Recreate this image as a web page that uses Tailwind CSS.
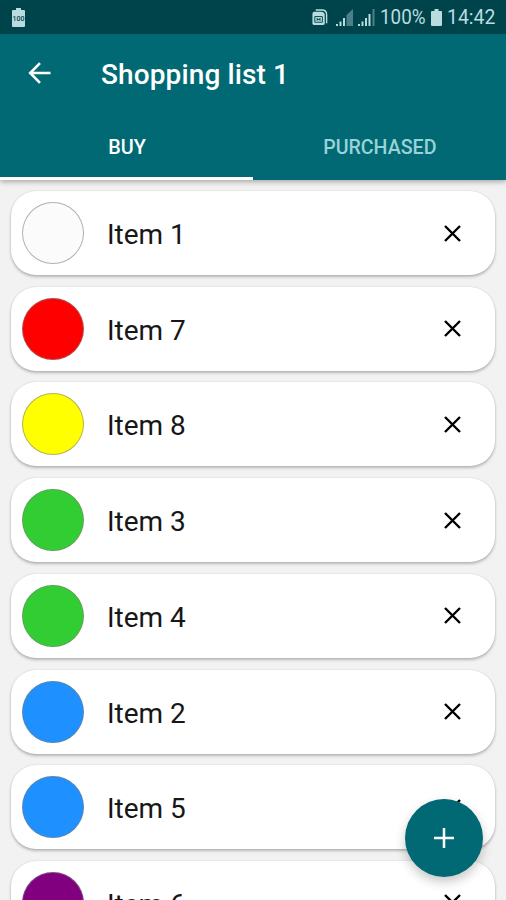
<!DOCTYPE html>
<html lang="en">
<head>
<meta charset="utf-8">
<title>Shopping list 1</title>
<script src="https://cdn.jsdelivr.net/npm/@tailwindcss/browser@4"></script>
</head>
<body class="relative flex h-[900px] w-[506px] flex-col overflow-hidden bg-[#f2f2f2] font-[Roboto,sans-serif]">
<header class="relative z-10 h-[180px] shrink-0 bg-[#006973] text-white shadow-[0_2px_5px_rgba(0,0,0,0.3)]">
  <div class="flex h-[34px] items-center bg-[#00444b] pr-[11px] pl-[12px] text-[#b9dce0]">
    <svg class="h-[19px] w-[13px]" viewBox="0 0 13 19" fill="currentColor"><path d="M4 0h5v2h3q1 0 1 1v15q0 1-1 1H1q-1 0-1-1V3q0-1 1-1h3z"/><text x="6.5" y="13" text-anchor="middle" font-size="7.5" font-weight="500" fill="#00444b" textLength="12" lengthAdjust="spacingAndGlyphs">100</text></svg>
    <div class="grow"></div>
    <svg class="mr-[8px] h-[17px] w-[16px]" viewBox="0 0 16 18" fill="none" stroke="currentColor"><path d="M3.500 1H10q5 0 5 5v9" stroke-width="1.500"/><path fill="currentColor" stroke="none" d="M2 3h7q4 0 4 4v8q0 2-2 2H2q-2 0-2-2V5q0-2 2-2z"/><path d="M2.500 8h8v6h-8z M5 9.500v3 M8 9.500v3 M5 11h3" stroke="#00444b" stroke-width="1"/></svg>
    <svg class="mr-[5px] h-[17px] w-[17px]" viewBox="0 0 17 17" fill="currentColor"><path d="M0 15h2v2H0zM3.500 12.500h2V17h-2zM7 9h2v8H7z"/><path opacity=".4" d="M10.500 6 17 0v17h-6.500z"/></svg>
    <svg class="mr-[5px] h-[17px] w-[17px]" viewBox="0 0 17 17" fill="currentColor"><path d="M0 15h2v2H0zM3.500 12.500h2V17h-2zM7 9h2v8H7zM10.500 5h2v12h-2z"/><path opacity=".4" d="M14.500 0h2v17h-2z"/></svg>
    <span class="w-[46px] text-[20px] whitespace-nowrap"><span class="inline-block origin-left scale-x-[0.94]">100%</span></span>
    <svg class="mr-[5px] ml-[5px] h-[17px] w-[11px]" viewBox="0 0 11 17" fill="currentColor"><path d="M3.500 0h4v2H10q1 0 1 1v13q0 1-1 1H1q-1 0-1-1V3q0-1 1-1h2.500z"/></svg>
    <span class="w-[48px] text-[20px] whitespace-nowrap"><span class="inline-block origin-left scale-x-[0.97]">14:42</span></span>
  </div>
  <div class="flex h-[79px] items-center pl-[28px]">
    <svg class="-mt-[1px] h-[22px] w-[23px]" viewBox="0 0 23 22" fill="none" stroke="currentColor" stroke-width="2.600"><path d="M22.500 11H2.500M12 1.200 2.200 11l9.800 9.800"/></svg>
    <h1 class="mt-[3px] ml-[50px] text-[28px] leading-none font-medium tracking-[0.120px] whitespace-nowrap">Shopping list 1</h1>
  </div>
  <nav class="grid h-[67px] grid-cols-2 text-center text-[20px] font-medium">
    <div class="border-b-[3px] border-white pt-[19px]"><span class="inline-block scale-x-[0.99]">BUY</span></div>
    <div class="pt-[19px] text-[#99d3d8]"><span class="inline-block scale-x-[0.98]">PURCHASED</span></div>
  </nav>
</header>
<main id="list" class="flex flex-col gap-[11.700px] px-[11px] pt-[11.100px]"></main>
<button aria-label="Add" class="absolute top-[799px] left-[405px] flex size-[78px] items-center justify-center rounded-full bg-[#006973] text-white shadow-[0_5px_11px_rgba(0,0,0,0.22)]">
  <svg class="size-[20px]" viewBox="0 0 20 20" stroke="currentColor" stroke-width="2.500"><path d="M10 0v20M0 10h20"/></svg>
</button>
<script>
const items = [
  ["Item 1", "bg-[#fbfbfb]"],
  ["Item 7", "bg-[#ff0000]"],
  ["Item 8", "bg-[#ffff00]"],
  ["Item 3", "bg-[#32cd32]"],
  ["Item 4", "bg-[#32cd32]"],
  ["Item 2", "bg-[#1e90ff]"],
  ["Item 5", "bg-[#1e90ff]"],
  ["Item 6", "bg-[#800080]"]
];
document.getElementById("list").innerHTML = items.map(([name, color]) => `
  <div class="flex h-[84px] shrink-0 items-center rounded-[25px] bg-white pr-[34px] pl-[11.400px] shadow-[0_2px_3px_rgba(0,0,0,0.24),0_0_2px_rgba(0,0,0,0.13)]">
    <div class="size-[62px] rounded-full border border-[#808080]/60 bg-clip-border ${color}"></div>
    <span class="mt-[4px] ml-[22.600px] grow text-[28px] leading-none text-[#171717]">${name}</span>
    <svg class="size-[17px]" viewBox="0 0 17 17" fill="none" stroke="#000" stroke-width="2.400"><path d="m1 1 15 15M16 1 1 16"/></svg>
  </div>`).join("");
</script>
</body>
</html>
